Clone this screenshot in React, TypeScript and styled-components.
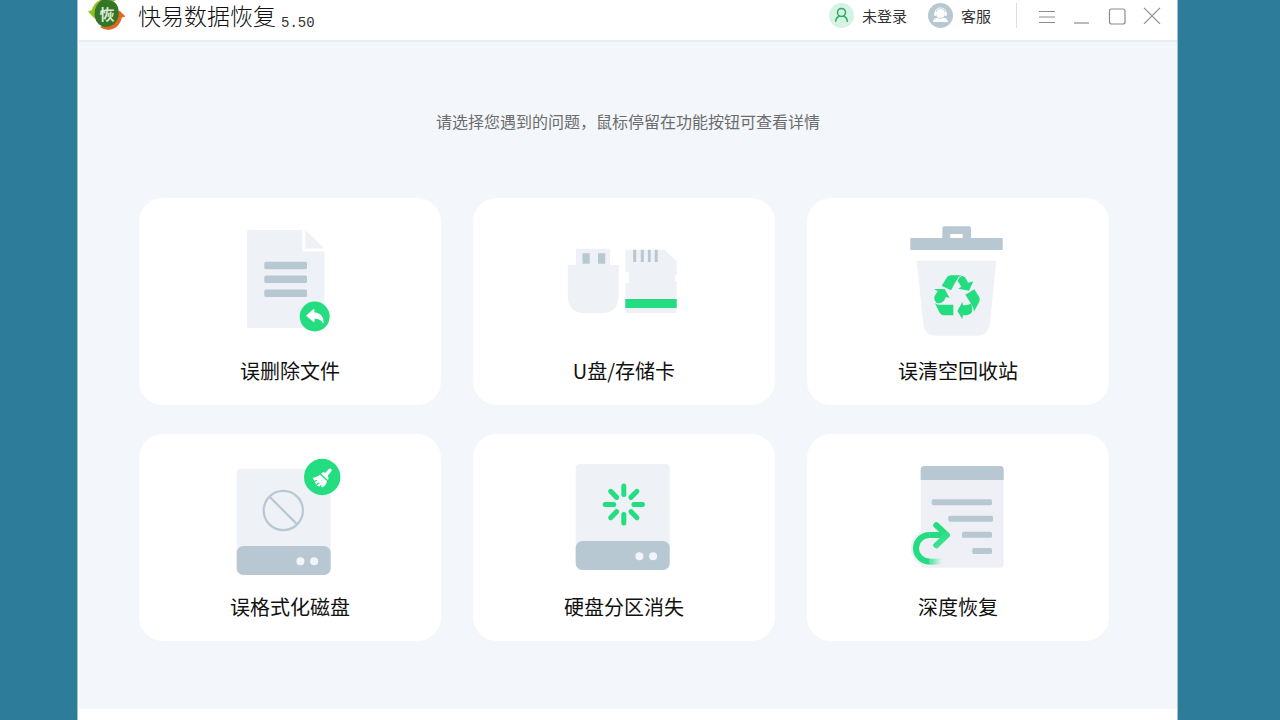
import React from "react";
import styled, { createGlobalStyle } from "styled-components";

const GREEN = "#24dd81";
const PALE = "#eef1f6";
const STEEL = "#b8c8d3";

const GlobalStyle = createGlobalStyle`
  * { box-sizing: border-box; }
  body {
    margin: 0;
    background: #2d7c99;
    font-family: "Noto Sans CJK SC", sans-serif;
  }
  button { font: inherit; color: inherit; border: 0; background: none; padding: 0; cursor: pointer; }
  svg { display: block; flex: none; }
`;

const Desktop = styled.div`
  display: flex;
  min-height: 100vh;
  padding: 0 102px 0 77px;
`;

const AppWindow = styled.div`
  flex: 1;
  min-width: 0;
  background: #fff;
  border: solid #9fc3d2;
  border-width: 0 1px;
`;

const TitleBar = styled.header`
  display: flex;
  align-items: center;
  justify-content: space-between;
  height: 40px;
  padding: 0 16px 9px 10px;
`;

const Brand = styled.div`
  display: flex;
  align-items: center;
`;

const BrandName = styled.h1`
  margin: 0 5px 0 12px;
  padding-bottom: 2px;
  font-size: 23px;
  line-height: 28px;
  font-weight: 300;
  color: #111;
`;

const Version = styled.span`
  padding-top: 14px;
  font: 14px/16px "Liberation Mono", monospace;
  color: #333;
`;

const Actions = styled.div`
  display: flex;
  align-items: center;
`;

const AccountButton = styled.button`
  display: flex;
  align-items: center;
  gap: 8px;
  margin-right: 21px;
  font-size: 15px;
  line-height: 24px;
  color: #333;
`;

const Divider = styled.span`
  width: 1px;
  height: 25px;
  margin: 0 21px 0 4px;
  background: #dedede;
`;

const WindowControls = styled.div`
  display: flex;
  gap: 17px;
`;

const ControlButton = styled.button`
  width: 18px;
  height: 18px;
`;

const Content = styled.main`
  margin: 0 0 0 1px;
  padding: 67px 68px 68px 60px;
  background: #f3f6fb;
  border-top: 2px solid #e6ebf4;
`;

const Hint = styled.p`
  margin: 0 0 65px;
  padding-left: 8px;
  font-size: 16px;
  line-height: 24px;
  text-align: center;
  color: #6c6c6c;
`;

const CardGrid = styled.div`
  display: grid;
  grid-template-columns: repeat(3, 1fr);
  gap: 29px 32px;
`;

const Card = styled.button`
  display: flex;
  flex-direction: column;
  align-items: center;
  height: 207px;
  padding-top: 10px;
  border-radius: 24px;
  background: #fff;
`;

const CardLabel = styled.span`
  margin-top: 8px;
  font-size: 20px;
  line-height: 30px;
  color: #111;
`;

const Art = ({ children }: { children: React.ReactNode }) => (
  <svg width="140" height="140" viewBox="0 0 140 140" fill="none" aria-hidden="true">
    {children}
  </svg>
);

const DeletedFileArt = () => (
  <Art>
    <path d="M29 22H82.3V43.5H104.5V118.5Q104.5 120 103 120H29Q27 120 27 118V24Q27 22 29 22Z" fill={PALE} />
    <path d="M85.3 22L104.5 40.5H85.3Z" fill={PALE} />
    {[53.7, 67.5, 81.5].map((y) => (
      <rect key={y} x="44.3" y={y} width="42.7" height="7.5" rx="1.6" fill={STEEL} />
    ))}
    <circle cx="94.7" cy="108.5" r="15" fill={GREEN} />
    <path d="M86 107.7L93.2 101.2Q94.4 100.4 94.4 102V104.6C101 105 104.3 109.5 103.4 115.8C101.5 112.3 98.7 110.7 94.6 110.8V113.1Q94.4 114.6 93.2 113.8Z" fill="#fff" />
  </Art>
);

const StorageArt = () => (
  <Art>
    <path d="M22 40.7H56V57H64.7V88C64.7 99 58 105.2 48 105.2H30.5C20.5 105.2 13.7 99 13.7 88V57H22Z" fill={PALE} />
    <path d="M28.5 45.3H35.7V55.7H28.5ZM44 45.3H51.2V55.7H44Z" fill={STEEL} />
    <path d="M71.3 41.7H110.3L122.7 53.3V66.7H120.8V73.3H122.7V105H71.3V75.3H75V64.3H71.3Z" fill={PALE} />
    <path d="M79.2 41.7H82.2V54H79.2ZM86.8 41.7H89.8V54H86.8ZM93.9 41.7H96.7V54H93.9ZM100.7 41.7H103.7V54H100.7Z" fill={STEEL} />
    <path d="M71.3 90.5H122.7" stroke="#f8f8fb" strokeWidth="1" />
    <path d="M71.3 91H122.7V100H71.3Z" fill={GREEN} />
  </Art>
);

const RecycleArt = () => (
  <Art>
    <path fillRule="evenodd" d="M22.3 30H54.3V20.5Q54.3 18.3 56.5 18.3H81Q83 18.3 83 20.5V30H114.7V42H22.3ZM62.3 26V30H74.7V26Z" fill={STEEL} />
    <path d="M28.7 52.7H108.3L102 115Q100.5 127.7 88 127.7H49Q36.5 127.7 35.2 115Z" fill={PALE} />
    <g transform="translate(2 7) scale(.3333)" fill={GREEN}>
      <path d="M155 212L171 187Q175 181 183 181H214Q205 185 200 195L183 226Z" />
      <path d="M203 198Q208 183 218 183Q226 184 234 203L250 199L237 227L205 221L214 215Z" />
      <path d="M132 222L164 222L179 249L168 246L162 257Q151 268 139 263Q130 252 134 243L143 229Z" />
      <path d="M135 265Q143 271 153 269H190V301H162Q154 301 149 293Z" />
      <path d="M202 288L217 261L219 271Q236 272 244 265Q248 280 246 291Q239 302 219 301L217 312Z" />
      <path d="M226 239L253 223L268 247Q271 254 267 262L252 290Q252 280 245 269Z" />
    </g>
  </Art>
);

const DriveBase = () => (
  <>
    <rect width="94" height="100" rx="4" fill={PALE} />
    <rect y="77" width="94" height="29" rx="6.5" fill={STEEL} />
    <circle cx="63.7" cy="92.3" r="4" fill="#f1f4f9" />
    <circle cx="77.4" cy="92.3" r="4" fill="#f1f4f9" />
  </>
);

const FormattedDiskArt = () => (
  <Art>
    <g transform="translate(16.7 25)">
      <DriveBase />
    </g>
    <circle cx="63.3" cy="66.5" r="19.6" stroke={STEEL} strokeWidth="2.2" />
    <path d="M49.5 52.7L77.2 80.4" stroke={STEEL} strokeWidth="2.2" />
    <circle cx="102.2" cy="33" r="18.2" fill={GREEN} />
    <g transform="translate(0 6) scale(.3333)">
      <path d="M326 58Q330 54 334 57Q337 61 333 65L323 77Q328 83 324 90L303 71Q309 65 316 68Z" fill="#fff" />
      <path d="M300 74L321 93Q319 106 308 112L290 107L278 83Q291 82 300 74Z" fill="#fff" />
      <path d="M280 96L291 91M286 107L298 98M299 113L304 105" stroke={GREEN} strokeWidth="3.5" />
    </g>
  </Art>
);

const LostPartitionArt = () => (
  <Art>
    <g transform="translate(21.7 20)">
      <DriveBase />
    </g>
    <g stroke={GREEN} strokeWidth="5" strokeLinecap="round">
      {[0, 45, 90, 135, 180, 225, 270, 315].map((angle) => (
        <path key={angle} d="M79.9 60.5H88.4" transform={`rotate(${angle} 69.8 60.5)`} />
      ))}
    </g>
  </Art>
);

const DeepRecoveryArt = () => (
  <Art>
    <defs>
      <linearGradient id="sweep" gradientUnits="userSpaceOnUse" x1="38" y1="0" x2="54" y2="0">
        <stop stopColor={GREEN} />
        <stop offset="1" stopColor={GREEN} stopOpacity="0" />
      </linearGradient>
      <linearGradient id="tip" gradientUnits="userSpaceOnUse" x1="54" y1="86" x2="60" y2="98">
        <stop stopColor={GREEN} />
        <stop offset="1" stopColor="#3fe292" />
      </linearGradient>
    </defs>
    <rect x="32.7" y="24" width="83" height="99.7" rx="3.5" fill="#eff0f6" />
    <circle cx="41.3" cy="104.3" r="18.6" fill="#eff0f6" />
    <path d="M32.7 36V25.5Q32.7 22 36.2 22H112.2Q115.7 22 115.7 25.5V36Z" fill={STEEL} />
    <g fill={STEEL}>
      <rect x="43.7" y="55.2" width="60.3" height="6" rx="1.6" />
      <rect x="60.3" y="71.7" width="44.7" height="6" rx="1.6" />
      <rect x="74" y="87.8" width="30" height="6" rx="1.6" />
      <rect x="84.3" y="104" width="19.7" height="6" rx="1.6" />
    </g>
    <path d="M41.3 91A13.3 13.3 0 0 0 41.3 117.6" stroke={GREEN} strokeWidth="6" />
    <path d="M41.2 117.6Q47 118 54 117" stroke="url(#sweep)" strokeWidth="6" />
    <path d="M41.2 91H58" stroke={GREEN} strokeWidth="6" />
    <path d="M48.3 81.3L59 91.1L48.3 101.3" stroke="url(#tip)" strokeWidth="6" strokeLinecap="round" strokeLinejoin="round" />
  </Art>
);

const Logo = () => (
  <svg width="38" height="31" viewBox="0 0 38 31" aria-hidden="true">
    <path d="M0 11.5L3.8 10Q6 3 12 0H28L12 8L9 13L6.5 18.5Z" fill="#93c01f" />
    <path d="M37.5 16.5L31.5 10.5L26 17L28 19L12 27Q17 30.8 23 29.6Q31.5 27.5 34 17.5Z" fill="#e06a22" />
    <path d="M19 0Q30 0 30.8 12Q31 20 25.5 24.5Q20 28.5 13.5 26Q6.5 22.5 6.5 13.5Q7 4 14 0Z" fill="#347527" />
    <text x="19" y="19.5" textAnchor="middle" fontSize="15" fontWeight="700" fill="#dcebd8">恢</text>
  </svg>
);

const UserIcon = () => (
  <svg width="25" height="25" viewBox="0 0 25 25" fill="none" aria-hidden="true">
    <circle cx="12.5" cy="12.5" r="12.5" fill="#d5f2e3" />
    <g stroke="#2aaa68" strokeWidth="1.5" strokeLinecap="round">
      <circle cx="12.5" cy="9.4" r="4" />
      <path d="M6.7 18.3C7 15.3 8.8 13.6 10.5 13M18.3 18.3C18 15.3 16.2 13.6 14.5 13" />
    </g>
  </svg>
);

const SupportIcon = () => (
  <svg width="25" height="25" viewBox="0 0 25 25" fill="none" aria-hidden="true">
    <circle cx="12.5" cy="12.5" r="12.5" fill={STEEL} />
    <path d="M7.2 10C6.7 3.2 18.3 3.2 17.8 10" stroke="#fff" strokeWidth="1" />
    <path d="M12.5 6A4.5 4.5 0 0 1 17 10.5Q17 14.7 12.5 14.8Q8 14.7 8 10.5A4.5 4.5 0 0 1 12.5 6Z" fill="#fff" />
    <path d="M6.2 9.2H8V12.8H6.2ZM17 9.2H18.8V12.8H17ZM5 19Q5 15.5 9.8 14.7Q12.5 16.5 15.2 14.7Q20 15.5 20 19Z" fill="#fff" />
  </svg>
);

const controls = [
  { label: "菜单", path: "M1 4.5H17M1 10H17M1 15.5H17" },
  { label: "最小化", path: "M1 16H16" },
  { label: "最大化", path: "M3.5 2H15Q17 2 17 4V15Q17 17 15 17H3.5Q1.5 17 1.5 15V4Q1.5 2 3.5 2Z" },
  { label: "关闭", path: "M1 .8L17 16.8M17 .8L1 16.8" },
];

const problems = [
  { label: "误删除文件", Icon: DeletedFileArt },
  { label: "U盘/存储卡", Icon: StorageArt },
  { label: "误清空回收站", Icon: RecycleArt },
  { label: "误格式化磁盘", Icon: FormattedDiskArt },
  { label: "硬盘分区消失", Icon: LostPartitionArt },
  { label: "深度恢复", Icon: DeepRecoveryArt },
];

export default function App() {
  return (
    <Desktop>
      <GlobalStyle />
      <AppWindow>
        <TitleBar>
          <Brand>
            <Logo />
            <BrandName>快易数据恢复</BrandName>
            <Version>5.50</Version>
          </Brand>
          <Actions>
            <AccountButton type="button">
              <UserIcon />
              未登录
            </AccountButton>
            <AccountButton type="button">
              <SupportIcon />
              客服
            </AccountButton>
            <Divider />
            <WindowControls>
              {controls.map(({ label, path }) => (
                <ControlButton key={label} type="button" aria-label={label}>
                  <svg width="18" height="18" viewBox="0 0 18 18" fill="none" aria-hidden="true">
                    <path d={path} stroke="#8c8c8c" strokeWidth="1.2" />
                  </svg>
                </ControlButton>
              ))}
            </WindowControls>
          </Actions>
        </TitleBar>
        <Content>
          <Hint>请选择您遇到的问题，鼠标停留在功能按钮可查看详情</Hint>
          <CardGrid>
            {problems.map(({ label, Icon }) => (
              <Card key={label} type="button">
                <Icon />
                <CardLabel>{label}</CardLabel>
              </Card>
            ))}
          </CardGrid>
        </Content>
      </AppWindow>
    </Desktop>
  );
}
